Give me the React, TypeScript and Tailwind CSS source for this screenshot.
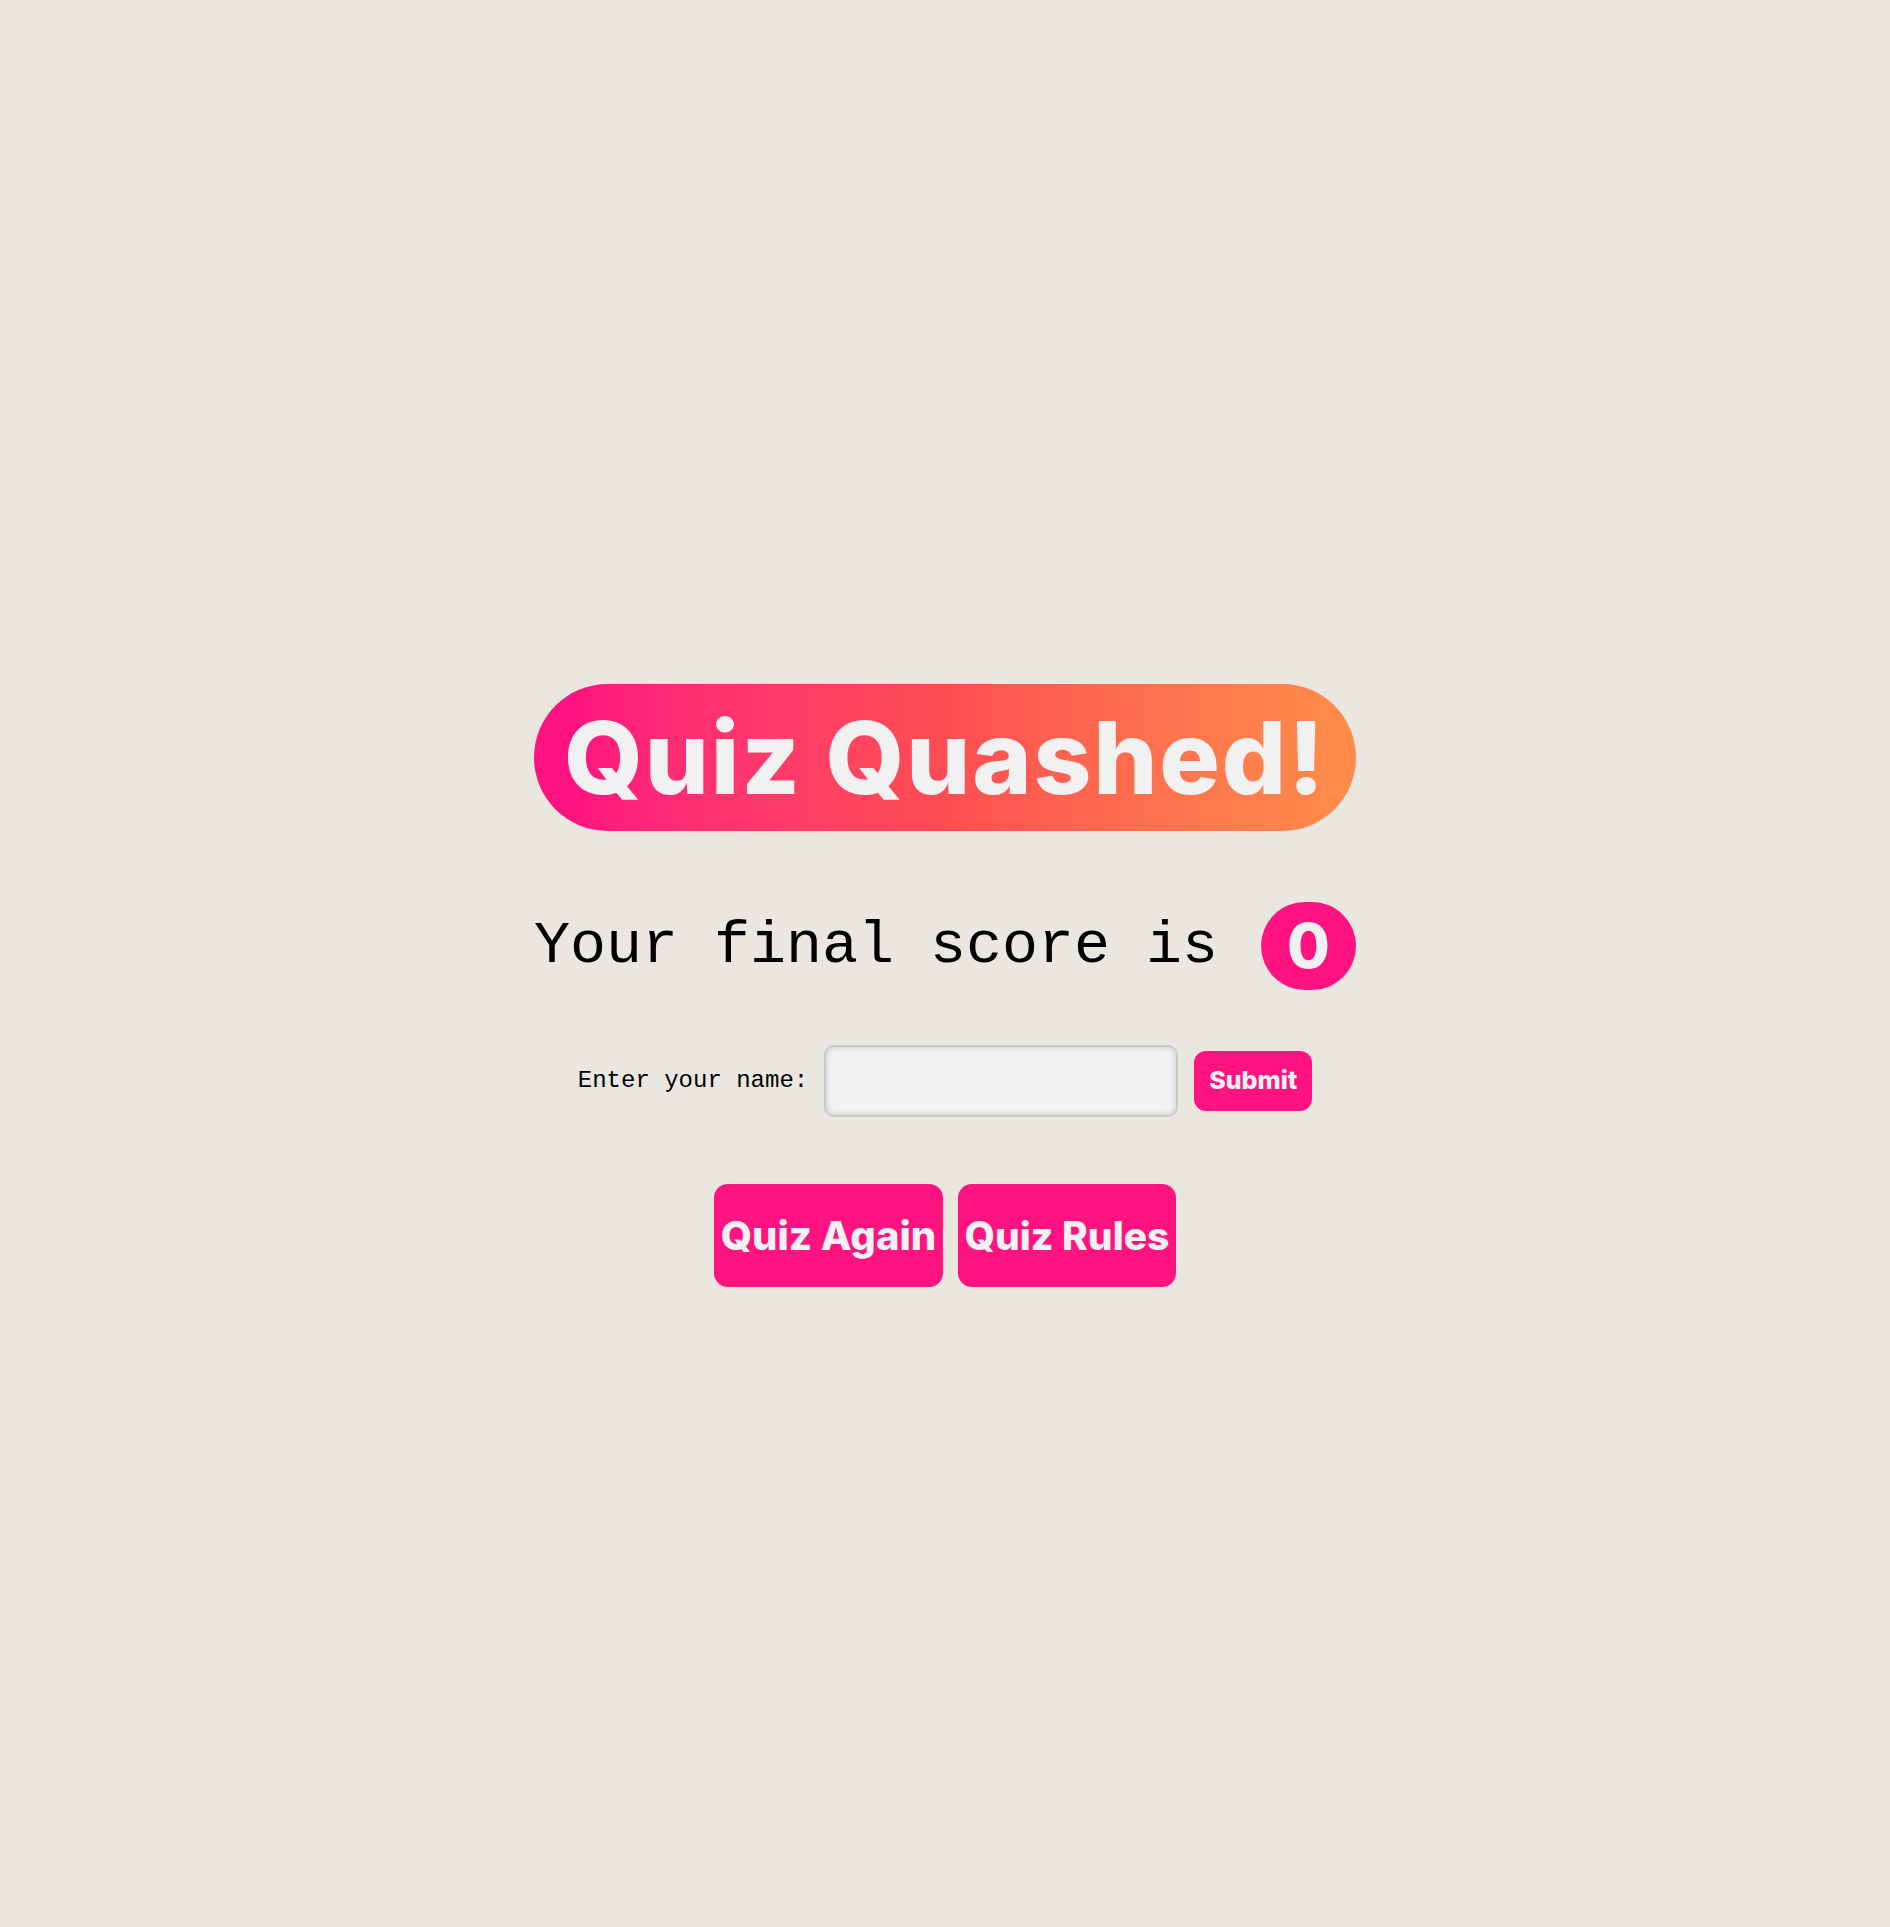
export default function App() {
  return (
    <div className="min-h-screen bg-[#eae7e0] flex flex-col items-center justify-center pt-[44px]">
      <h1 className="h-[147px] px-[30px] rounded-full bg-gradient-to-r from-[#ff1380] from-5% via-[#ff4d52] to-[#ff8d4a] flex items-center font-['Inter',sans-serif] font-extrabold text-[101px] leading-none tracking-[1.8px] text-[#f1f1f1]">
        Quiz Quashed!
      </h1>

      <div className="mt-[71px] flex items-center h-[88px]">
        <span className="font-['Liberation_Mono',monospace] text-[60px] leading-none text-black">
          Your final score is
        </span>
        <span className="ml-[43px] w-[95px] h-[88px] rounded-full bg-[#ff1380] flex items-center justify-center font-['Inter',sans-serif] font-extrabold text-[62px] leading-none text-[#f1f1f1]">
          0
        </span>
      </div>

      <form className="mt-[55px] flex items-center gap-4" onSubmit={(e) => e.preventDefault()}>
        <label className="font-['Liberation_Mono',monospace] text-[24px] text-black">Enter your name:</label>
        <input
          type="text"
          className="w-[354px] h-[72px] bg-[#f2f2f2] border-2 border-[#c9c9c9] rounded-[10px] shadow-[inset_0_0_6px_rgba(0,0,0,0.18)] outline-none px-3"
        />
        <button
          type="submit"
          className="w-[118px] h-[60px] rounded-[12px] bg-[#ff1380] font-['Inter',sans-serif] font-extrabold text-[25px] text-[#f1f1f1]"
        >
          Submit
        </button>
      </form>

      <div className="mt-[67px] flex gap-[15px]">
        <button className="w-[229px] h-[103px] rounded-[14px] bg-[#ff1380] font-['Inter',sans-serif] font-extrabold text-[40px] leading-none text-[#f1f1f1]">
          Quiz Again
        </button>
        <button className="w-[218px] h-[103px] rounded-[14px] bg-[#ff1380] font-['Inter',sans-serif] font-extrabold text-[39px] leading-none text-[#f1f1f1]">
          Quiz Rules
        </button>
      </div>
    </div>
  );
}
